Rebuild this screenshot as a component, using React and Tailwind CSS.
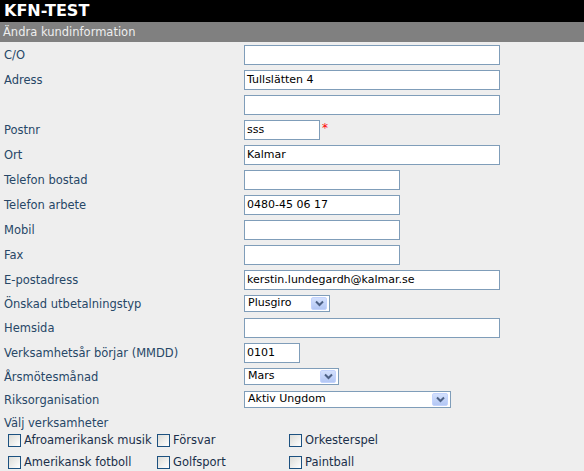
import React from "react";

const font = { fontFamily: '"DejaVu Sans", Verdana, sans-serif' };

function Arrow() {
  return (
    <span className="absolute right-[2px] top-[1px] bottom-[1px] w-[16px] rounded-[2px] bg-gradient-to-b from-[#d3e0fd] to-[#b3c7f4] border border-[#c3d3fd] flex items-center justify-center">
      <svg width="9" height="7" viewBox="0 0 9 7">
        <path d="M1 1.5 L4.5 5 L8 1.5" stroke="#4d6185" strokeWidth="2" fill="none" />
      </svg>
    </span>
  );
}

function Input({ w, value }) {
  return (
    <div
      className={`h-[20px] ${w} border border-[#7f9db9] bg-white flex items-center px-[2px] text-[11px] text-black mb-[5px]`}
    >
      {value}
    </div>
  );
}

function Select({ w, value }) {
  return (
    <div
      className={`relative h-[17px] ${w} border border-[#7f9db9] bg-white flex items-center px-[3px] text-[11px] text-black mb-[6px]`}
    >
      {value}
      <Arrow />
    </div>
  );
}

function Row({ label, children }) {
  return (
    <div className="flex items-start">
      <div className="w-[244px] pl-[4px] text-[11.5px] text-[#274767] leading-[21px]">{label}</div>
      {children}
    </div>
  );
}

function SelRow({ label, children }) {
  return (
    <div className="flex items-start">
      <div className="w-[244px] pl-[4px] text-[11.5px] text-[#274767] leading-[18px]">{label}</div>
      {children}
    </div>
  );
}

function Check({ label, w }) {
  return (
    <div className={`flex items-center ${w}`}>
      <span className="w-[13px] h-[13px] border border-[#1c5180] bg-gradient-to-br from-[#dcdcd7] to-[#ffffff] mr-[3px] shrink-0" />
      <span className="text-[11.5px] text-[#1a2f4a] whitespace-nowrap leading-[14px]">{label}</span>
    </div>
  );
}

export default function App() {
  return (
    <div className="w-[584px] h-[471px] bg-[#eeeeee] overflow-hidden" style={font}>
      <div className="h-[22px] bg-black text-white font-bold text-[16px] leading-[22px] pl-[4px]">KFN-TEST</div>
      <div className="h-[20px] bg-[#808080] text-[#eeeeee] text-[11.5px] leading-[20px] pl-[3px]">Ändra kundinformation</div>
      <div className="pt-[3px]">
        <Row label="C/O"><Input w="w-[256px]" /></Row>
        <Row label="Adress"><Input w="w-[256px]" value="Tullslätten 4" /></Row>
        <Row label=""><Input w="w-[256px]" /></Row>
        <Row label="Postnr">
          <div className="flex items-start">
            <Input w="w-[76px]" value="sss" />
            <span className="text-[#ff0000] text-[12px] ml-[2px] leading-[16px]">*</span>
          </div>
        </Row>
        <Row label="Ort"><Input w="w-[256px]" value="Kalmar" /></Row>
        <Row label="Telefon bostad"><Input w="w-[156px]" /></Row>
        <Row label="Telefon arbete"><Input w="w-[156px]" value="0480-45 06 17" /></Row>
        <Row label="Mobil"><Input w="w-[156px]" /></Row>
        <Row label="Fax"><Input w="w-[156px]" /></Row>
        <Row label="E-postadress"><Input w="w-[256px]" value="kerstin.lundegardh@kalmar.se" /></Row>
        <SelRow label="Önskad utbetalningstyp"><Select w="w-[86px]" value="Plusgiro" /></SelRow>
        <Row label="Hemsida"><Input w="w-[256px]" /></Row>
        <Row label="Verksamhetsår börjar (MMDD)"><Input w="w-[56px]" value="0101" /></Row>
        <SelRow label="Årsmötesmånad"><Select w="w-[95px]" value="Mars" /></SelRow>
        <SelRow label="Riksorganisation"><Select w="w-[207px]" value="Aktiv Ungdom" /></SelRow>
        <div className="pl-[4px] text-[11.5px] text-[#274767] leading-[16px] mt-[1px]">Välj verksamheter</div>
        <div className="pl-[8px] mt-[2px] flex flex-col gap-[8px]">
          <div className="flex">
            <Check w="w-[149px]" label="Afroamerikansk musik" />
            <Check w="w-[132px]" label="Försvar" />
            <Check w="w-[150px]" label="Orkesterspel" />
          </div>
          <div className="flex">
            <Check w="w-[149px]" label="Amerikansk fotboll" />
            <Check w="w-[132px]" label="Golfsport" />
            <Check w="w-[150px]" label="Paintball" />
          </div>
        </div>
      </div>
    </div>
  );
}
